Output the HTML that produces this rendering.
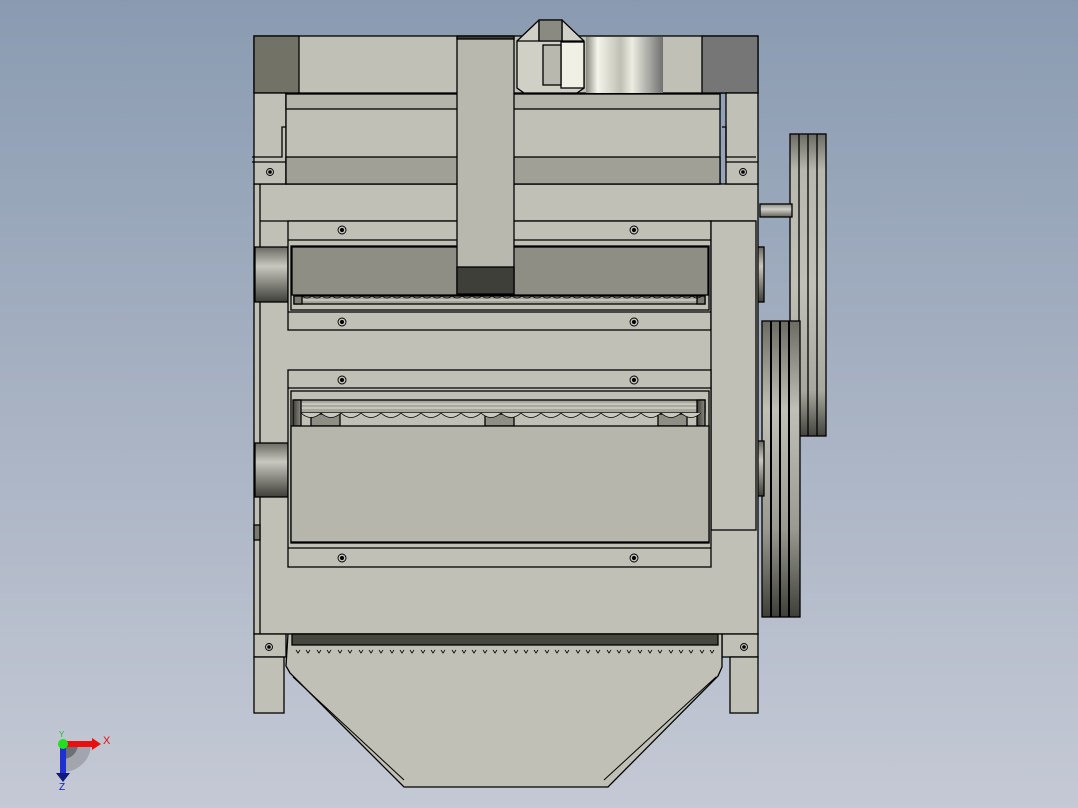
<!DOCTYPE html>
<html><head><meta charset="utf-8"><style>
html,body{margin:0;padding:0;width:1078px;height:808px;overflow:hidden}
body{background:linear-gradient(#8a9bb1,#c5c9d5)}
svg{position:absolute;left:0;top:0}
text{font-family:"Liberation Sans",sans-serif}
</style></head><body>
<svg width="1078" height="808" viewBox="0 0 1078 808" xmlns="http://www.w3.org/2000/svg">
<defs>
<linearGradient id="cylV" x1="0" y1="0" x2="0" y2="1">
<stop offset="0" stop-color="#6a6a62"/><stop offset="0.35" stop-color="#c8c8c0"/><stop offset="1" stop-color="#3e3f38"/></linearGradient>
<linearGradient id="shine" x1="0" y1="0" x2="1" y2="0">
<stop offset="0" stop-color="#8a8a80"/><stop offset="0.15" stop-color="#f4f4ea"/><stop offset="0.45" stop-color="#c0c0b4"/><stop offset="0.6" stop-color="#ecece2"/><stop offset="1" stop-color="#707070"/></linearGradient>
<linearGradient id="pul" x1="0" y1="0" x2="0" y2="1">
<stop offset="0" stop-color="#6c6c64"/><stop offset="0.12" stop-color="#b8b8ae"/><stop offset="0.5" stop-color="#c0c0b6"/><stop offset="0.85" stop-color="#a8a89e"/><stop offset="1" stop-color="#44453e"/></linearGradient>
<linearGradient id="pul2" x1="0" y1="0" x2="0" y2="1">
<stop offset="0" stop-color="#6c6c64"/><stop offset="0.3" stop-color="#c0c0b6"/><stop offset="0.7" stop-color="#9a9a90"/><stop offset="1" stop-color="#3e3f38"/></linearGradient>
<linearGradient id="shaft" x1="0" y1="0" x2="0" y2="1">
<stop offset="0" stop-color="#8a8a82"/><stop offset="0.4" stop-color="#d0d0c8"/><stop offset="1" stop-color="#606058"/></linearGradient>
<linearGradient id="cornerdark" x1="0" y1="0" x2="1" y2="0">
<stop offset="0" stop-color="#3e3f38"/><stop offset="1" stop-color="#8a8a82"/></linearGradient>
</defs>
<g stroke="#000" stroke-width="1.3">
<rect x="790" y="134" width="36" height="302" fill="url(#pul)"/>
<line x1="799" y1="134" x2="799" y2="436"/><line x1="808" y1="134" x2="808" y2="436"/><line x1="817" y1="134" x2="817" y2="436"/>
<rect x="760" y="204" width="32" height="13" fill="url(#shaft)"/>
<rect x="762" y="321" width="38" height="296" fill="url(#pul2)"/>
<line x1="771" y1="321" x2="771" y2="617" stroke-width="2"/><line x1="780" y1="321" x2="780" y2="617" stroke-width="2"/><line x1="789" y1="321" x2="789" y2="617" stroke-width="2"/>
<rect x="756" y="247" width="8" height="55" fill="url(#cylV)"/>
<rect x="756" y="441" width="8" height="55" fill="url(#cylV)"/>

<rect x="254" y="184" width="504" height="450" fill="#c0c0b6"/>
<line x1="260" y1="184" x2="260" y2="634"/>
<line x1="260" y1="221" x2="756" y2="221"/>
<rect x="255" y="247" width="33" height="55" fill="url(#cylV)"/>
<rect x="255" y="443" width="33" height="54" fill="url(#cylV)"/>
<rect x="254" y="525" width="6" height="15" fill="#7a7a70"/>

<rect x="254" y="36" width="504" height="57" fill="#c0c0b6"/>
<rect x="254" y="36" width="45" height="57" fill="#727266"/>
<rect x="702" y="36" width="56" height="57" fill="#767676"/>
<rect x="586" y="37" width="77" height="56" fill="url(#shine)" stroke="none"/>
<rect x="254" y="93" width="32" height="91" fill="#c0c0b6"/>
<rect x="726" y="93" width="32" height="91" fill="#c0c0b6"/>
<path d="M286 94 H720 V184 H286 Z" fill="#c0c0b6"/>
<rect x="286" y="94" width="434" height="15" fill="#b4b4aa"/>
<rect x="286" y="157" width="434" height="27" fill="#a0a096"/>
<path d="M252 157 H282 V127 H286" fill="none"/>
<path d="M756 157 H726 V127 H722" fill="none"/>
<line x1="252" y1="162" x2="286" y2="162"/><line x1="726" y1="162" x2="758" y2="162"/>
<path d="M517 41 L539 20 H562 L584 41 V88 L577 93 H524 L517 88 Z" fill="#d0d0c6"/>
<path d="M539 20 V41 M562 20 V41 M517 41 H584" fill="none"/>
<rect x="561" y="42" width="23" height="46" fill="#f0f0e4"/>
<rect x="543" y="45" width="18" height="40" fill="#b8b8ae"/>
<path d="M539 20 L562 20 L562 41 L539 41 Z" fill="#8a8a80"/>

<rect x="288" y="221" width="423" height="109" fill="#c0c0b6"/>
<line x1="288" y1="240" x2="711" y2="240"/>
<line x1="288" y1="312" x2="711" y2="312"/>
<rect x="291" y="246" width="418" height="64" fill="#c0c0b6"/>
<rect x="292" y="247" width="416" height="48" fill="#8e8e84"/>
<rect x="294" y="296" width="411" height="8" fill="#a4a49a"/>
<line x1="300" y1="300" x2="700" y2="300" stroke="#e0e0d8" stroke-width="1"/>
<rect x="294" y="296" width="8" height="8" fill="#7a7a70"/>
<rect x="697" y="296" width="8" height="8" fill="#7a7a70"/>
<rect x="711" y="221" width="45" height="309" fill="#c0c0b6"/>
<!-- vertical bar on top -->
<rect x="457" y="38" width="57" height="256" fill="#b8b8ae"/>
<rect x="457" y="36" width="57" height="3" fill="#3e3f38"/>
<rect x="457" y="267" width="57" height="27" fill="#3e3f38"/>

<rect x="288" y="370" width="423" height="197" fill="#c0c0b6"/>
<line x1="288" y1="388" x2="711" y2="388"/>
<line x1="288" y1="548" x2="711" y2="548"/>
<rect x="291" y="391" width="418" height="152" fill="#c0c0b6"/>
<rect x="294" y="400" width="411" height="13" fill="#a8a89e"/>
<line x1="298" y1="404" x2="700" y2="404" stroke="#e4e4dc" stroke-width="1"/>
<line x1="298" y1="408" x2="700" y2="408" stroke="#e4e4dc" stroke-width="1"/>
<rect x="293" y="400" width="8" height="26" fill="url(#cornerdark)"/>
<rect x="697" y="400" width="8" height="26" fill="url(#cornerdark)"/>
<rect x="311" y="414" width="29" height="12" fill="#8e8e84"/>
<rect x="485" y="414" width="29" height="12" fill="#8e8e84"/>
<rect x="658" y="414" width="29" height="12" fill="#8e8e84"/>
<rect x="291" y="426" width="418" height="116" fill="#b6b6ac"/>

<rect x="254" y="634" width="32" height="23" fill="#c0c0b6"/>
<rect x="722" y="634" width="36" height="23" fill="#c0c0b6"/>
<rect x="254" y="657" width="30" height="56" fill="#c0c0b6"/>
<rect x="730" y="657" width="28" height="56" fill="#c0c0b6"/>
<path d="M288 634 H722 V667 L718 676 L608 787 H404 L290 673 L286 666 Z" fill="#c0c0b6"/>
<path d="M293 677 L404 780 M716 677 L604 780" fill="none" stroke-width="1"/>
<rect x="292" y="634" width="426" height="11" fill="#464840"/>
</g>
<g fill="#8a8a80" stroke="#000" stroke-width="0.8">
<path d="M302 296 q5 4 10 0 q5 4 10 0 q5 4 10 0 q5 4 10 0 q5 4 10 0 q5 4 10 0 q5 4 10 0 q5 4 10 0 q5 4 10 0 q5 4 10 0 q5 4 10 0 q5 4 10 0 q5 4 10 0 q5 4 10 0 q5 4 10 0 q5 4 10 0 q5 4 10 0 q5 4 10 0 q5 4 10 0 q5 4 10 0 q5 4 10 0 q5 4 10 0 q5 4 10 0 q5 4 10 0 q5 4 10 0 q5 4 10 0 q5 4 10 0 q5 4 10 0 q5 4 10 0 q5 4 10 0 q5 4 10 0 q5 4 10 0 q5 4 10 0 q5 4 10 0 q5 4 10 0 q5 4 10 0 q5 4 10 0 q5 4 10 0 q5 4 10 0 q5 4 10 0" fill="none"/>
<path d="M301 413 q10 9 20 0 q10 9 20 0 q10 9 20 0 q10 9 20 0 q10 9 20 0 q10 9 20 0 q10 9 20 0 q10 9 20 0 q10 9 20 0 q10 9 20 0 q10 9 20 0 q10 9 20 0 q10 9 20 0 q10 9 20 0 q10 9 20 0 q10 9 20 0 q10 9 20 0 q10 9 20 0 q10 9 20 0 q10 9 20 0" fill="#c8c8be"/>
</g>
<g fill="none" stroke="#000" stroke-width="0.8">
<path d="M296 650 l2 3 l2 -3 M306 650 l2 3 l2 -3 M317 650 l2 3 l2 -3 M327 650 l2 3 l2 -3 M338 650 l2 3 l2 -3 M348 650 l2 3 l2 -3 M359 650 l2 3 l2 -3 M369 650 l2 3 l2 -3 M379 650 l2 3 l2 -3 M390 650 l2 3 l2 -3 M400 650 l2 3 l2 -3 M410 650 l2 3 l2 -3 M421 650 l2 3 l2 -3 M431 650 l2 3 l2 -3 M441 650 l2 3 l2 -3 M452 650 l2 3 l2 -3 M462 650 l2 3 l2 -3 M472 650 l2 3 l2 -3 M483 650 l2 3 l2 -3 M493 650 l2 3 l2 -3 M503 650 l2 3 l2 -3 M514 650 l2 3 l2 -3 M524 650 l2 3 l2 -3 M534 650 l2 3 l2 -3 M545 650 l2 3 l2 -3 M555 650 l2 3 l2 -3 M565 650 l2 3 l2 -3 M576 650 l2 3 l2 -3 M586 650 l2 3 l2 -3 M596 650 l2 3 l2 -3 M607 650 l2 3 l2 -3 M617 650 l2 3 l2 -3 M627 650 l2 3 l2 -3 M638 650 l2 3 l2 -3 M648 650 l2 3 l2 -3 M658 650 l2 3 l2 -3 M669 650 l2 3 l2 -3 M679 650 l2 3 l2 -3 M689 650 l2 3 l2 -3 M700 650 l2 3 l2 -3 M710 650 l2 3 l2 -3"/>
</g>
<g stroke="#000" stroke-width="0.9" fill="none">
<circle cx="342" cy="230" r="4"/><circle cx="634" cy="230" r="4"/>
<circle cx="342" cy="322" r="4"/><circle cx="634" cy="322" r="4"/>
<circle cx="342" cy="380" r="4"/><circle cx="634" cy="380" r="4"/>
<circle cx="342" cy="558" r="4"/><circle cx="634" cy="558" r="4"/>
<circle cx="270" cy="172" r="3.5"/><circle cx="743" cy="172" r="3.5"/>
<circle cx="269" cy="647" r="3.5"/><circle cx="744" cy="647" r="3.5"/>
</g>
<g fill="#000">
<circle cx="342" cy="230" r="2"/><circle cx="634" cy="230" r="2"/>
<circle cx="342" cy="322" r="2"/><circle cx="634" cy="322" r="2"/>
<circle cx="342" cy="380" r="2"/><circle cx="634" cy="380" r="2"/>
<circle cx="342" cy="558" r="2"/><circle cx="634" cy="558" r="2"/>
<circle cx="270" cy="172" r="1.8"/><circle cx="743" cy="172" r="1.8"/>
<circle cx="269" cy="647" r="1.8"/><circle cx="744" cy="647" r="1.8"/>
</g>
<path d="M63 744 H91 A28 28 0 0 1 63 772 Z" fill="#9a9ca4" opacity="0.8"/>
<path d="M63 744 H78 A15 15 0 0 1 63 759 Z" fill="#6e7078"/>
<rect x="63" y="741" width="30" height="6" fill="#e81010"/>
<path d="M92 738 L101 744 L92 750 Z" fill="#e81010"/>
<rect x="60" y="744" width="6" height="30" fill="#2030d0"/>
<path d="M56 773 L63 782 L70 773 Z" fill="#101880"/>
<circle cx="63" cy="744" r="5" fill="#20e020"/>
<text x="103" y="744" font-size="11" fill="#e01010">X</text>
<text x="59" y="790" font-size="10" fill="#1020c0">Z</text>
<text x="59" y="737" font-size="8" fill="#20c020">Y</text>
</svg>
</body></html>
